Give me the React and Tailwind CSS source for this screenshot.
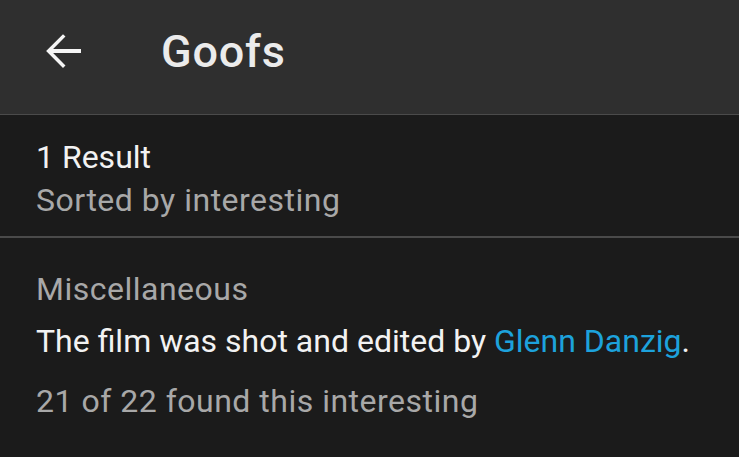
import React from 'react';

export default function App() {
  return (
    <div className="w-[739px] h-[457px] overflow-hidden bg-[#1b1b1b] font-['Roboto',sans-serif]">
      {/* Toolbar */}
      <div className="h-[115px] bg-[#2f2f2f] border-b border-[#4b4b4b] flex items-center pb-[10px]">
        <button className="ml-[36px] mb-[2px] w-[54px] h-[54px] flex items-center justify-center">
          <svg width="54" height="54" viewBox="0 0 24 24">
            <path
              d="M20 11.1H7.6l5.5-5.5L12 4.5 4.5 12l7.5 7.5 1.1-1.1-5.5-5.5H20z"
              fill="#f5f5f5"
            />
          </svg>
        </button>
        <h1 className="ml-[71px] text-[45px] leading-[52px] font-medium text-[#ebebeb] tracking-[0.8px]">Goofs</h1>
      </div>

      {/* Result summary */}
      <div className="px-[36px] pt-[21px] pb-[14px] border-b-2 border-[#4a4a4a]">
        <p className="text-[32px] leading-[43px] text-[#f2f2f2]">1 Result</p>
        <p className="text-[32px] leading-[43px] text-[#a8a8a8] tracking-[0.5px]">Sorted by interesting</p>
      </div>

      {/* Goof item */}
      <div className="px-[36px] pt-[30px]">
        <p className="text-[32px] leading-[43px] text-[#a8a8a8] tracking-[0.5px]">Miscellaneous</p>
        <p className="mt-[9px] text-[32px] leading-[43px] text-[#f2f2f2]">
          The film was shot and edited by <span className="text-[#1da2dc]">Glenn Danzig</span>.
        </p>
        <p className="mt-[17px] text-[32px] leading-[43px] text-[#a8a8a8] tracking-[0.5px]">21 of 22 found this interesting</p>
      </div>
    </div>
  );
}
